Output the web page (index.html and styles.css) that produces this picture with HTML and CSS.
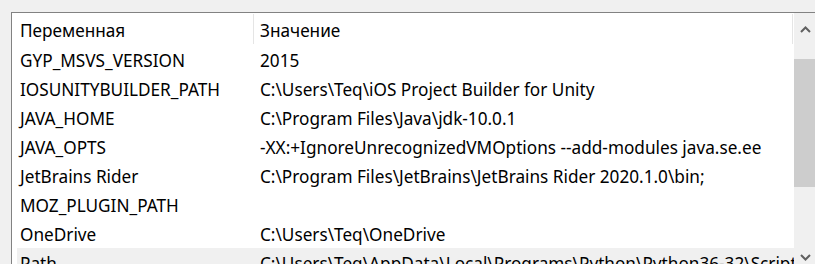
FILE: index.html
```html
<!DOCTYPE html>
<html>
<head>
<meta charset="utf-8">
<link rel="stylesheet" href="styles.css">
</head>
<body>
<div class="frame">
  <div class="list">
    <div class="table">
      <div class="header">
        <div class="hcell name">Переменная</div>
        <div class="hcell value">Значение</div>
      </div>
      <div class="row"><div class="cell name">GYP_MSVS_VERSION</div><div class="cell value">2015</div></div>
      <div class="row"><div class="cell name">IOSUNITYBUILDER_PATH</div><div class="cell value">C:\Users\Teq\iOS Project Builder for Unity</div></div>
      <div class="row"><div class="cell name">JAVA_HOME</div><div class="cell value">C:\Program Files\Java\jdk-10.0.1</div></div>
      <div class="row"><div class="cell name">JAVA_OPTS</div><div class="cell value">-XX:+IgnoreUnrecognizedVMOptions --add-modules java.se.ee</div></div>
      <div class="row"><div class="cell name">JetBrains Rider</div><div class="cell value">C:\Program Files\JetBrains\JetBrains Rider 2020.1.0\bin;</div></div>
      <div class="row"><div class="cell name">MOZ_PLUGIN_PATH</div><div class="cell value"></div></div>
      <div class="row"><div class="cell name">OneDrive</div><div class="cell value">C:\Users\Teq\OneDrive</div></div>
      <div class="row selected"><div class="cell name">Path</div><div class="cell value">C:\Users\Teq\AppData\Local\Programs\Python\Python36-32\Scripts\;C:\Users\Teq</div></div>
    </div>
    <div class="scrollbar">
      <div class="arrow up">
        <svg width="11" height="7" viewBox="0 0 11 7"><path d="M1 6 L5.5 1.5 L10 6" fill="none" stroke="#606060" stroke-width="2"/></svg>
      </div>
      <div class="track">
        <div class="thumb"></div>
      </div>
      <div class="arrow down">
        <svg width="11" height="7" viewBox="0 0 11 7"><path d="M1 1 L5.5 5.5 L10 1" fill="none" stroke="#606060" stroke-width="2"/></svg>
      </div>
    </div>
  </div>
</div>
</body>
</html>
```
FILE: styles.css
```css
html, body {
  margin: 0;
  padding: 0;
  background: #f0f0f0;
  overflow: hidden;
}
body {
  width: 815px;
  height: 264px;
}
.frame {
  padding: 12px 0 0 11px;
  height: 252px;
  overflow: hidden;
}
.list {
  display: flex;
  border-top: 1px solid #828282;
  border-left: 1px solid #828282;
  background: #fff;
  height: 251px;
  font-family: "Noto Sans", sans-serif;
  font-size: 17.2px;
  color: #000;
}
.table {
  width: 782px;
  flex: none;
  overflow: hidden;
}
.header {
  display: flex;
  height: 32px;
  align-items: stretch;
}
.hcell {
  display: flex;
  align-items: center;
  padding-top: 3px;
  box-sizing: border-box;
  border-right: 1px solid #e5e5e5;
  margin: 1px 0 1px;
  white-space: nowrap;
}
.hcell.name {
  width: 242px;
  padding-left: 8px;
}
.hcell.value {
  width: 539px;
  padding-left: 6px;
}
.row {
  display: flex;
  height: 29px;
  box-sizing: border-box;
  padding-top: 2px;
  align-items: center;
  margin-left: 5px;
  white-space: nowrap;
}
.row.selected {
  background: #f0f0f0;
}
.cell.name {
  width: 237px;
  padding-left: 3px;
  box-sizing: border-box;
  flex: none;
}
.cell.value {
  padding-left: 6px;
}
.scrollbar {
  flex: 1;
  background: #f0f0f0;
  display: flex;
  flex-direction: column;
  height: 251px;
}
.arrow {
  display: flex;
  justify-content: center;
  padding-left: 2px;
}
.arrow.up {
  height: 46px;
  padding-top: 13px;
  box-sizing: border-box;
  align-items: flex-start;
}
.track {
  flex: 1;
}
.thumb {
  height: 128px;
  background: #cdcdcd;
}
.arrow.down {
  height: 20px;
  align-items: flex-end;
  padding-bottom: 3px;
  box-sizing: border-box;
}
```
